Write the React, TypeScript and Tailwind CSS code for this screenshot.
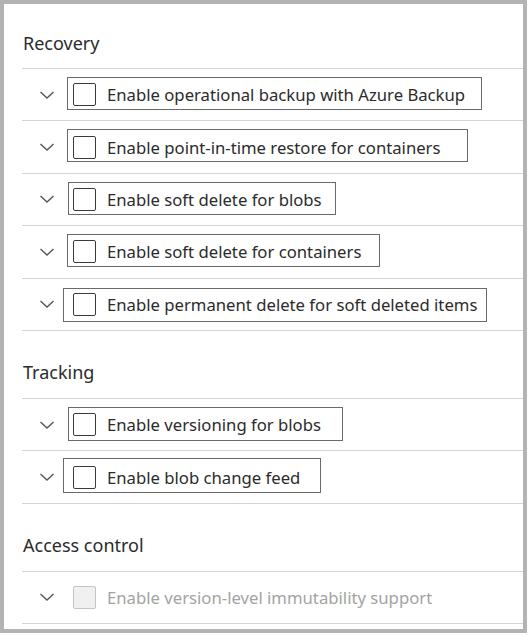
import React from 'react';

interface Item {
  label: string;
  box?: { left: number; top: number; width: number; height: number };
  disabled?: boolean;
}

interface Section {
  title: string;
  items: Item[];
}

const sections: Section[] = [
  {
    title: 'Recovery',
    items: [
      { label: 'Enable operational backup with Azure Backup', box: { left: 45, top: 8, width: 415, height: 33 } },
      { label: 'Enable point-in-time restore for containers', box: { left: 45, top: 8, width: 401, height: 33 } },
      { label: 'Enable soft delete for blobs', box: { left: 46, top: 8, width: 268, height: 33 } },
      { label: 'Enable soft delete for containers', box: { left: 45, top: 8, width: 313, height: 33 } },
      { label: 'Enable permanent delete for soft deleted items', box: { left: 41, top: 9, width: 424, height: 34 } },
    ],
  },
  {
    title: 'Tracking',
    items: [
      { label: 'Enable versioning for blobs', box: { left: 46, top: 8, width: 275, height: 34 } },
      { label: 'Enable blob change feed', box: { left: 41, top: 7, width: 258, height: 35 } },
    ],
  },
  {
    title: 'Access control',
    items: [{ label: 'Enable version-level immutability support', disabled: true }],
  },
];

const Chevron = () => (
  <svg width="16" height="10" viewBox="0 0 16 10" fill="none" className="text-[#555]">
    <polyline points="1.5,2 8,8 14.5,2" stroke="currentColor" strokeWidth="1.4" />
  </svg>
);

const Row = ({ item }: { item: Item }) => (
  <div className="relative h-[52.4px] border-b border-[#d4d4d4] flex items-center">
    <div className="w-[51px] pl-[17px] flex items-center">
      <Chevron />
    </div>
    <div
      className={
        item.disabled
          ? 'w-[23px] h-[23px] rounded-[2px] border border-[#c4c4c4] bg-[#f0f0f0]'
          : 'w-[23px] h-[23px] rounded-[2px] border border-[#3a3a3a] bg-white'
      }
    />
    <span className={item.disabled ? 'ml-[11px] text-[16.7px] text-[#a3a3a3]' : 'ml-[11px] text-[16.7px] text-[#2b2b2b]'}>
      {item.label}
    </span>
    {item.box && (
      <div
        className="absolute border-[1.5px] border-[#6a6a6a] pointer-events-none"
        style={{ left: item.box.left, top: item.box.top, width: item.box.width, height: item.box.height }}
      />
    )}
  </div>
);

export default function App() {
  return (
    <div
      className="w-[527px] h-[633px] border-4 border-[#b3b3b3] bg-white pt-[14px] pl-[18px] flex flex-col gap-[17px]"
      style={{ fontFamily: '"Noto Sans", "Open Sans", Arial, sans-serif' }}
    >
      {sections.map((section) => (
        <div key={section.title}>
          <h2 className="h-[50px] flex items-center pl-[1px] text-[18px] text-[#2b2b2b]">{section.title}</h2>
          <div className="border-t border-[#d4d4d4]">
            {section.items.map((item) => (
              <Row key={item.label} item={item} />
            ))}
          </div>
        </div>
      ))}
    </div>
  );
}
